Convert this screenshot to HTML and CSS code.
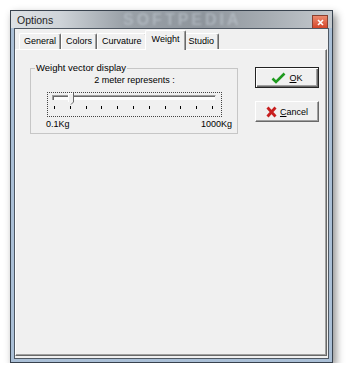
FILE: index.html
```html
<!DOCTYPE html>
<html lang="en">
<head>
    <meta charset="UTF-8">
    <title>Options</title>
    <link rel="stylesheet" href="styles.css">
</head>
<body>
    <div class="window">
        <div class="titlebar">
            <span class="title">Options</span>
            <span class="mark">SOFTPEDIA</span>
            <span class="close">
                <svg width="7" height="7" viewBox="0 0 7 7"><path d="M1 1L6 6M6 1L1 6" stroke="#fff" stroke-width="1.6"/></svg>
            </span>
        </div>
        <div class="client">
            <div class="tabs">
                <div class="tab">General</div>
                <div class="tab">Colors</div>
                <div class="tab">Curvature</div>
                <div class="tab active">Weight</div>
                <div class="tab">Studio</div>
            </div>
            <div class="panel">
                <fieldset class="group">
                    <legend>Weight vector display</legend>
                    <div class="caption">2 meter represents :</div>
                    <div class="slider">
                        <div class="track"></div>
                        <svg class="thumb" width="6" height="12" viewBox="0 0 6 12">
                            <path d="M0.5 0.5H5.5V9L3 11.5L0.5 9Z" fill="#f0f0f0"/>
                            <path d="M0.5 9V0.5H5" stroke="#fff" fill="none"/>
                            <path d="M5.5 0V9L3 11.5" stroke="#696969" fill="none"/>
                        </svg>
                        <div class="ticks">
                            <i></i><i></i><i></i><i></i><i></i><i></i><i></i><i></i><i></i><i></i><i></i>
                        </div>
                    </div>
                    <div class="range"><span>0.1Kg</span><span>1000Kg</span></div>
                </fieldset>
                <div class="buttons">
                    <div class="btn default">
                        <svg width="15" height="12" viewBox="0 0 15 12"><path d="M1.5 6.5L5 10L13.5 1.5" stroke="#1f9a1f" stroke-width="2.6" fill="none"/></svg>
                        <span><u>O</u>K</span>
                    </div>
                    <div class="btn">
                        <svg width="11" height="12" viewBox="0 0 11 12"><path d="M1.5 1.5L9.5 10.5M9.5 1.5L1.5 10.5" stroke="#c81e1e" stroke-width="2.8" fill="none"/></svg>
                        <span><u>C</u>ancel</span>
                    </div>
                </div>
            </div>
        </div>
    </div>
</body>
</html>
```

FILE: styles.css
```css
* {
    box-sizing: border-box;
}
body {
    margin: 0;
    background: #fff;
    font-family: "Liberation Sans", Arial, sans-serif;
    font-size: 9px;
    color: #000;
}
.window {
    margin: 10px 0 0 10px;
    width: 323px;
    height: 353px;
    border: 1px solid #38424e;
    background: #aabfd6;
    display: flex;
    flex-direction: column;
    box-shadow: 3px 4px 8px rgba(0, 0, 0, 0.45);
}
.titlebar {
    height: 17px;
    display: flex;
    align-items: center;
    padding: 0 4px 0 6px;
    position: relative;
    overflow: hidden;
    background: linear-gradient(90deg, #dde1e5 0%, #cfd4d9 15%, #9aa1a8 35%, #8e959c 60%, #a7adb3 80%, #c4c9ce 100%);
}
.title {
    font-size: 10.5px;
    color: #1e1e1e;
    position: relative;
    z-index: 1;
}
.mark {
    position: absolute;
    left: 112px;
    top: 0;
    font-size: 16px;
    line-height: 17px;
    font-weight: bold;
    letter-spacing: 3px;
    color: rgba(200, 208, 216, 0.5);
    filter: blur(1px);
}
.close {
    margin-left: auto;
    align-self: flex-end;
    width: 16px;
    height: 13px;
    display: flex;
    align-items: center;
    justify-content: center;
    border: 1px solid #8a4030;
    border-bottom: none;
    background: linear-gradient(#ec8a6e, #d4462a);
    position: relative;
    z-index: 1;
}
.client {
    flex: 1;
    margin: 0 3px 3px;
    border: 1px solid #4f5863;
    background: #f0f0f0;
    display: flex;
    flex-direction: column;
    padding: 0 1px 2px 0;
}
.tabs {
    display: flex;
    align-items: flex-end;
    height: 20px;
    padding-left: 4px;
}
.tab {
    height: 16px;
    padding: 1px 4px 0 4px;
    line-height: 13px;
    border-top: 1px solid #fff;
    border-left: 1px solid #fff;
    border-right: 1px solid #696969;
    border-radius: 2px 2px 0 0;
    box-shadow: inset -1px 0 #a0a0a0;
}
.tab.active {
    height: 20px;
    margin: 0 -2px -1px;
    padding: 2px 6px 0 6px;
    background: #f0f0f0;
    position: relative;
    z-index: 1;
}
.tab.active + .tab {
    border-left: none;
}
.panel {
    flex: 1;
    display: flex;
    align-items: flex-start;
    padding: 12px 0 0 14px;
    border-top: 1px solid #fff;
    border-left: 1px solid #fff;
    border-right: 1px solid #696969;
    border-bottom: 1px solid #696969;
    box-shadow: inset -1px -1px #a0a0a0;
}
.group {
    margin: 0;
    padding: 0 2px 0 0;
    min-width: 0;
    width: 208px;
    height: 72px;
    border: 1px solid #c6c6c6;
}
.group legend {
    margin-left: 4px;
    padding: 0 1px;
    line-height: 12px;
    font-size: 9.5px;
}
.caption {
    text-align: center;
    line-height: 12px;
    padding-left: 3px;
}
.slider {
    position: relative;
    margin: 6px 0 0 16px;
    width: 175px;
    height: 25px;
    border: 1px dotted #444;
}
.track {
    margin: 2px 0 0 4px;
    width: 164px;
    height: 5px;
    background: #fff;
    border-top: 1px solid #a0a0a0;
    border-left: 1px solid #a0a0a0;
    border-right: 1px solid #f0f0f0;
    box-shadow: inset 1px 1px #696969;
}
.thumb {
    position: absolute;
    left: 20px;
    top: 0;
}
.ticks {
    display: flex;
    justify-content: space-between;
    margin: 6px 0 0 6px;
    width: 159px;
}
.ticks i {
    width: 1px;
    height: 3px;
    background: #000;
}
.range {
    display: flex;
    justify-content: space-between;
    margin: 1px 3px 0 15px;
    line-height: 13px;
}
.buttons {
    display: flex;
    flex-direction: column;
    gap: 13px;
    margin: 5px 0 0 17px;
}
.btn {
    width: 64px;
    height: 21px;
    display: flex;
    align-items: center;
    justify-content: center;
    gap: 3px;
    background: #f0f0f0;
    border: 1px solid;
    border-color: #fff #696969 #696969 #fff;
    box-shadow: inset -1px -1px #a0a0a0;
}
.btn.default {
    border-color: #222;
    box-shadow: inset 1px 1px #fff, inset -1px -1px #696969, inset -2px -2px #a0a0a0;
}
```
